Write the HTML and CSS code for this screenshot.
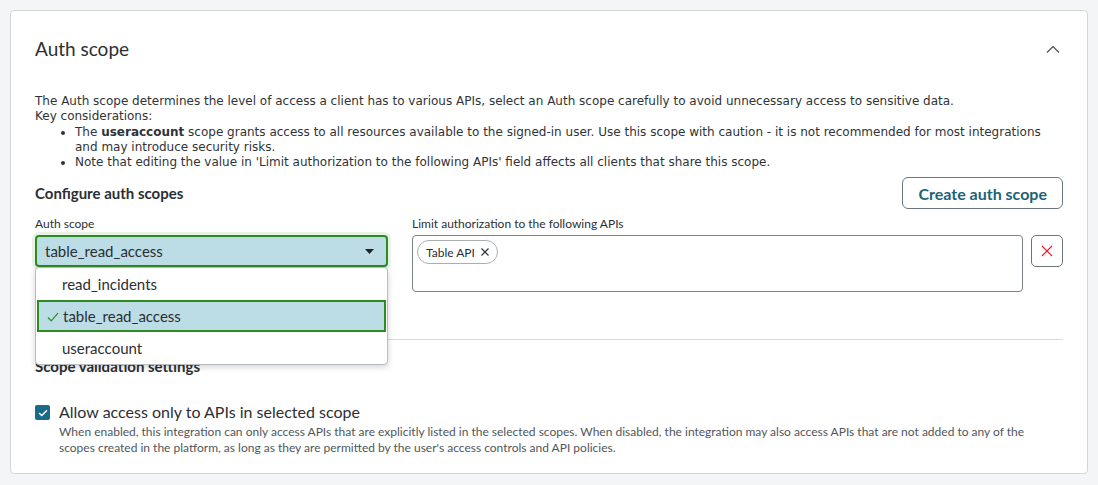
FILE: index.html
```html
<!DOCTYPE html>
<html lang="en">
<head>
    <meta charset="UTF-8">
    <meta name="viewport" content="width=device-width, initial-scale=1.0">
    <title>Auth scope</title>
    <link rel="stylesheet" href="styles.css">
</head>
<body>
    <div class="card">
        <div class="card-header">
            <h2>Auth scope</h2>
            <svg class="chevron" width="14" height="8" viewBox="0 0 14 8">
                <path d="M1 7.5 L7 1.5 L13 7.5" fill="none" stroke="#4a4f55" stroke-width="1.2"/>
            </svg>
        </div>

        <div class="intro">
            The Auth scope determines the level of access a client has to various APIs, select an Auth scope carefully to avoid unnecessary access to sensitive data.<br>
            Key considerations:
            <ul>
                <li>The <strong>useraccount</strong> scope grants access to all resources available to the signed-in user. Use this scope with caution - it is not recommended for most integrations and may introduce security risks.</li>
                <li>Note that editing the value in 'Limit authorization to the following APIs' field affects all clients that share this scope.</li>
            </ul>
        </div>

        <div class="section-head">
            <h3>Configure auth scopes</h3>
            <button class="btn-outline">Create auth scope</button>
        </div>

        <div class="field-row">
            <div class="field scope-field">
                <label>Auth scope</label>
                <div class="select-wrap">
                    <div class="select">
                        <span>table_read_access</span>
                        <svg width="9" height="5" viewBox="0 0 9 5"><path d="M0 0 H9 L4.5 5 Z" fill="#1f2326"/></svg>
                    </div>
                    <ul class="dropdown">
                        <li>read_incidents</li>
                        <li class="selected">
                            <svg class="tick" width="12" height="10" viewBox="0 0 12 10"><path d="M1 5.5 L4.2 8.8 L11 1.2" fill="none" stroke="#2e8b1f" stroke-width="1.2"/></svg>
                            table_read_access
                        </li>
                        <li>useraccount</li>
                    </ul>
                </div>
            </div>
            <div class="field api-field">
                <label>Limit authorization to the following APIs</label>
                <div class="api-box">
                    <span class="chip">Table API
                        <svg class="chip-x" width="8" height="8" viewBox="0 0 8 8"><path d="M0.5 0.5 L7.5 7.5 M7.5 0.5 L0.5 7.5" stroke="#2b2f33" stroke-width="1.1"/></svg>
                    </span>
                </div>
            </div>
            <button class="btn-delete">
                <svg width="12" height="12" viewBox="0 0 12 12"><path d="M1 1 L11 11 M11 1 L1 11" stroke="#e3202e" stroke-width="1.2"/></svg>
            </button>
        </div>

        <hr class="divider">

        <h3 class="validation-title">Scope validation settings</h3>

        <div class="check-row">
            <span class="checkbox">
                <svg width="10" height="8" viewBox="0 0 10 8"><path d="M1 4 L3.8 6.6 L9 1.2" fill="none" stroke="#fff" stroke-width="1.4"/></svg>
            </span>
            <div>
                <div class="check-label">Allow access only to APIs in selected scope</div>
                <div class="check-help">When enabled, this integration can only access APIs that are explicitly listed in the selected scopes. When disabled, the integration may also access APIs that are not added to any of the scopes created in the platform, as long as they are permitted by the user's access controls and API policies.</div>
            </div>
        </div>
    </div>
</body>
</html>
```

FILE: styles.css
```css
body {
    margin: 0;
    padding: 10px;
    background-color: #f4f5f7;
    font-family: Lato, "Noto Sans", sans-serif;
    color: #2b2f33;
}

.card {
    box-sizing: border-box;
    width: 1078px;
    height: 464px;
    background-color: #fff;
    border: 1px solid #d3d6d9;
    border-radius: 4px;
    padding: 26px 24px 0 24px;
}

.card-header {
    display: flex;
    justify-content: space-between;
    align-items: center;
    height: 24px;
}

.card-header h2 {
    margin: 0;
    font-size: 19px;
    font-weight: 400;
    line-height: 22px;
}

.chevron {
    margin-right: 3px;
}

/* description block uses a system-ish font */
.intro {
    margin-top: 33px;
    font-family: "DejaVu Sans", Verdana, sans-serif;
    font-size: 12px;
    line-height: 15.3px;
    color: #2f3337;
}

.intro ul {
    margin: 0;
    padding-left: 40px;
}

.section-head {
    display: flex;
    justify-content: space-between;
    align-items: center;
    margin-top: 7px;
}

.section-head h3,
.validation-title {
    margin: 0;
    font-size: 15px;
    font-weight: 700;
    line-height: 20px;
}

.btn-outline {
    height: 32px;
    padding: 0 15px;
    background: #fff;
    border: 1px solid #6b757c;
    border-radius: 6px;
    font-family: Lato, sans-serif;
    font-size: 16px;
    font-weight: 700;
    color: #1a6378;
}

.field-row {
    display: flex;
    align-items: flex-start;
    margin-top: 7px;
}

.field label {
    display: block;
    font-size: 12px;
    line-height: 16px;
    margin-bottom: 3px;
    color: #2b2f33;
}

.scope-field {
    width: 353px;
    margin-right: 24px;
}

.api-field {
    width: 611px;
    margin-right: 8px;
}

.select-wrap {
    position: relative;
}

.select {
    box-sizing: border-box;
    height: 32px;
    display: flex;
    justify-content: space-between;
    align-items: center;
    padding: 0 12px 0 8px;
    background-color: #bcdde5;
    border: 2px solid #2e8b1f;
    border-radius: 4px;
    box-shadow: 0 0 0 3px #e8f3e6;
    font-size: 15px;
}

.dropdown {
    position: absolute;
    top: 32px;
    left: 0;
    right: 0;
    margin: 0;
    padding: 0;
    list-style: none;
    background: #fff;
    border: 1px solid #b8bdc1;
    border-radius: 4px;
    box-shadow: 0 2px 6px rgba(0, 0, 0, 0.18);
    z-index: 5;
}

.dropdown li {
    height: 32px;
    display: flex;
    align-items: center;
    padding-left: 26px;
    font-size: 15px;
}

.dropdown li.selected {
    position: relative;
    margin: 0 1px;
    padding-left: 24px;
    box-sizing: border-box;
    background-color: #bcdde5;
    border: 2px solid #2e8b1f;
}

.tick {
    position: absolute;
    left: 8px;
    top: 10px;
}

.api-box {
    box-sizing: border-box;
    height: 57px;
    border: 1px solid #7a8388;
    border-radius: 4px;
    padding: 4px;
}

.chip {
    display: inline-flex;
    align-items: center;
    padding: 0 8px 0 8px;
    height: 22px;
    border: 1px solid #a9aeb2;
    border-radius: 12px;
    font-size: 12px;
}

.chip-x {
    margin-left: 6px;
}

.btn-delete {
    margin-top: 19px;
    width: 32px;
    height: 32px;
    padding: 0;
    display: flex;
    align-items: center;
    justify-content: center;
    background: #fff;
    border: 1px solid #6b757c;
    border-radius: 5px;
}

.divider {
    margin: 47px 0 0 0;
    border: 0;
    border-top: 1px solid #d9dcdf;
}

.validation-title {
    margin-top: 16px;
}

.check-row {
    display: flex;
    align-items: flex-start;
    margin-top: 26px;
}

.checkbox {
    width: 15px;
    height: 15px;
    margin: 3px 9px 0 0;
    flex-shrink: 0;
    border-radius: 2px;
    background-color: #1a6b87;
    display: flex;
    align-items: center;
    justify-content: center;
}

.check-label {
    font-size: 16px;
    line-height: 20px;
}

.check-help {
    margin-top: 2px;
    font-size: 12px;
    line-height: 16px;
    color: #50565b;
    width: 970px;
}
```
